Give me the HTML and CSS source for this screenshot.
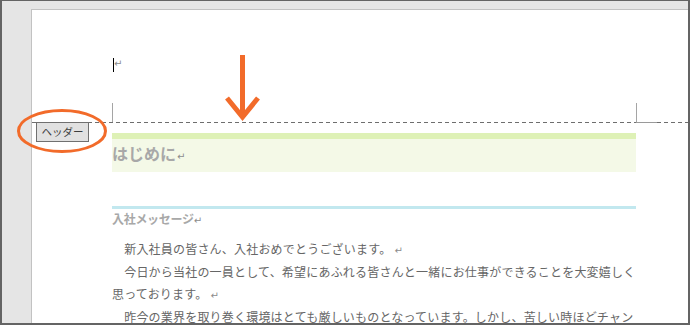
FILE: index.html
```html
<!DOCTYPE html>
<html lang="ja">
<head>
<meta charset="utf-8">
<link rel="stylesheet" href="styles.css">
</head>
<body>
<div class="frame">
  <div class="page">
    <div class="header-area">
      <p class="cursor-line"><span class="caret"></span><span class="ret">↵</span></p>
      <div class="marks"></div>
      <div class="rule"><span class="dash first"></span><span class="solid"></span><span class="dash rest"></span></div>
    </div>
    <div class="h1">はじめに<span class="ret">↵</span></div>
    <div class="h2">入社メッセージ<span class="ret">↵</span></div>
    <p class="body indent">新入社員の皆さん、入社おめでとうございます。<span class="ret">↵</span></p>
    <p class="body indent">今日から当社の一員として、希望にあふれる皆さんと一緒にお仕事ができることを大変嬉しく思っております。<span class="ret">↵</span></p>
    <p class="body indent">昨今の業界を取り巻く環境はとても厳しいものとなっています。しかし、苦しい時ほどチャンスでもあります。<span class="ret">↵</span></p>
  </div>
  <div class="header-tag">ヘッダー</div>
  <svg class="ellipse" width="94" height="48" viewBox="0 0 94 48">
    <ellipse cx="47" cy="24" rx="43.5" ry="20.5" fill="none" stroke="#f26b2a" stroke-width="3"/>
  </svg>
  <svg class="arrow" width="45" height="75" viewBox="0 0 45 75">
    <line x1="22.5" y1="5" x2="22.5" y2="66" stroke="#f26b2a" stroke-width="5"/>
    <polyline points="7,48 22.5,67 38,48" fill="none" stroke="#f26b2a" stroke-width="5" stroke-linejoin="miter" stroke-miterlimit="10"/>
  </svg>
</div>
</body>
</html>
```
FILE: styles.css
```css
* { box-sizing: border-box; }
html, body { margin: 0; padding: 0; }
body {
  font-family: "Noto Sans CJK JP", "Noto Sans", sans-serif;
  background: #fff;
}
.frame {
  position: relative;
  width: 690px;
  height: 325px;
  overflow: hidden;
  background: #e5e5e5;
  border-top: 1px solid #646464;
  border-left: 2px solid #646464;
  border-right: 2px solid #646464;
  border-bottom: 2px solid #646464;
  padding: 8px 0 0 29px;
}
.page {
  background: #fff;
  border-left: 1px solid #c2c2c2;
  border-top: 1px solid #c2c2c2;
  height: 400px;
  padding: 0 52px 0 80px;
}
.header-area {
  padding-top: 48px;
  margin-left: -80px;
  margin-right: -52px;
}
.cursor-line {
  margin: 0 0 0 81px;
  height: 14px;
  display: flex;
  align-items: flex-start;
}
.caret {
  display: block;
  width: 1px;
  height: 14px;
  background: #000;
}
.ret {
  font-family: "DejaVu Sans", sans-serif;
  font-size: 10px;
  font-weight: normal;
  color: #8c8c8c;
  letter-spacing: 0;
  line-height: 0;
}
.cursor-line .ret {
  margin-top: 1px;
  margin-left: 0;
  line-height: 10px;
}
.marks {
  margin: 31px 0 0 80px;
  width: 525px;
  height: 19px;
  border-left: 1px solid #a5a5a5;
  border-right: 1px solid #a5a5a5;
}
.rule {
  display: flex;
  height: 1px;
}
.rule .dash {
  height: 1px;
  background: repeating-linear-gradient(to right, #6e6e6e 0 4px, transparent 4px 7px);
}
.rule .first { width: 604px; }
.rule .solid { width: 21px; background: #9a9a9a; }
.rule .rest { flex: 1; }

.h1 {
  margin-top: 10px;
  border-top: 6px solid #def1b6;
  background: #f4f9e7;
  height: 39px;
  padding-top: 3px;
  font-size: 16px;
  line-height: 22px;
  font-weight: bold;
  color: #a8a8a8;
}
.h1 .ret { margin-left: 1px; }
.h2 {
  margin-top: 34px;
  border-top: 3px solid #c2e8ef;
  padding-top: 2px;
  font-size: 12px;
  line-height: 16px;
  font-weight: bold;
  color: #a8a8a8;
  letter-spacing: -0.3px;
}
.body {
  margin: 0 0 1.5px;
  font-size: 12px;
  line-height: 21.5px;
  color: #666;
  letter-spacing: 0.2px;
}
.h2 + .body { margin-top: 11px; }
.indent { text-indent: 12.2px; }
.body .ret { margin-left: 3px; }

.header-tag {
  position: absolute;
  left: 34px;
  top: 121px;
  width: 53px;
  height: 20px;
  background: #e1e1e1;
  border: 1px solid #707070;
  font-size: 10.5px;
  line-height: 18px;
  text-align: center;
  color: #3c3c3c;
}
.ellipse {
  position: absolute;
  left: 13px;
  top: 106px;
}
.arrow {
  position: absolute;
  left: 218px;
  top: 49px;
}
```
